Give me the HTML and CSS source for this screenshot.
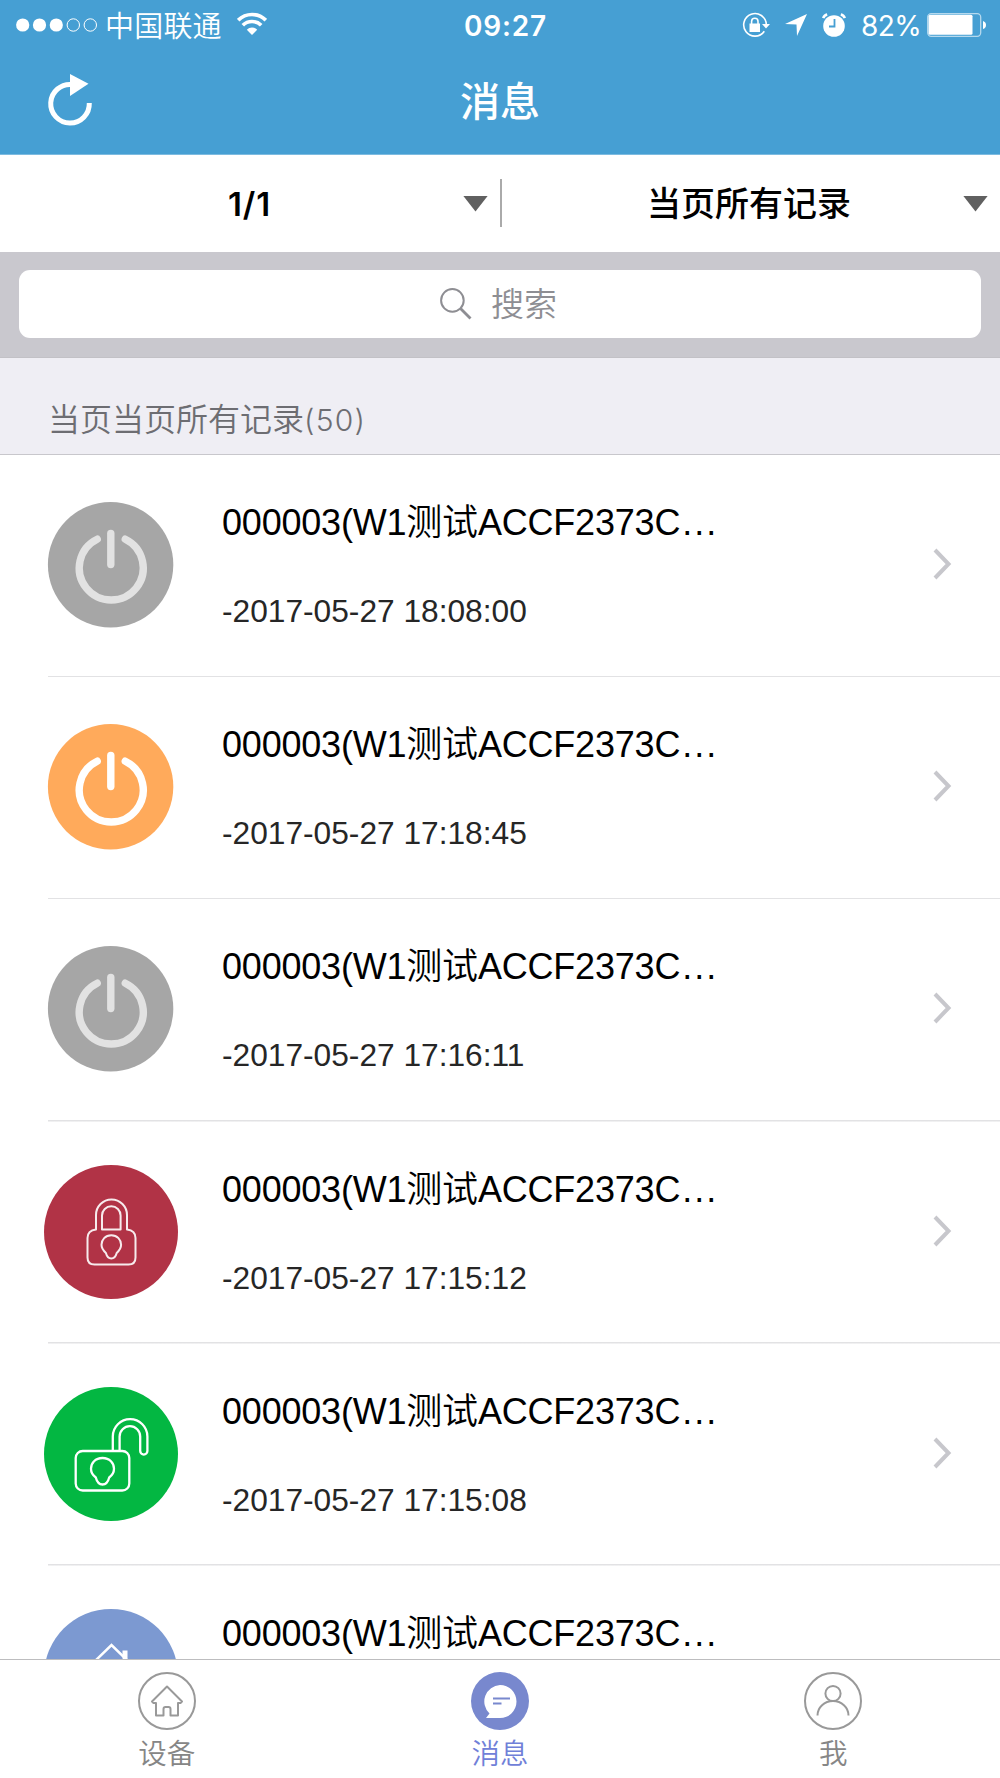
FILE: index.html
```html
<!DOCTYPE html>
<html lang="zh-CN">
<head>
<meta charset="utf-8">
<title>消息</title>
<link rel="stylesheet" href="styles.css">
</head>
<body>
<svg class="defs" width="0" height="0">
  <defs>
    <symbol id="power" viewBox="0 0 134 134">
      <circle class="disc" cx="66.6" cy="66.800" r="62.7"/>
      <g fill="none" stroke="currentColor" stroke-width="7.4" stroke-linecap="round">
        <path d="M53.2 41.200A32 32 0 1 0 81.3 41.200"/>
        <path d="M66.8 35.500v31"/>
      </g>
    </symbol>
    <symbol id="lock" viewBox="0 0 134 134">
      <circle class="disc" cx="67" cy="67" r="67"/>
      <g fill="none" stroke="#fff" stroke-opacity=".9" stroke-width="2" stroke-linejoin="round">
        <path d="M52 64.500V50a15.500 15.500 0 0 1 31 0v14.500q8.500 1 8.500 8.500v19.500q0 7-7 7h-34q-7 0-7-7V73q0-7.500 8.500-8.500z"/>
        <path d="M58 64.500V50.500a9.300 9.300 0 0 1 18.600 0v14z"/>
        <path d="M67.300 70.300c6 0 9.800 4.400 9.800 9.500 0 4-2 6-4.400 8.200-.8 3-2 5.500-5.400 5.500s-4.600-2.500-5.400-5.500c-2.400-2.200-4.400-4.200-4.400-8.200 0-5.100 3.800-9.500 9.800-9.500z"/>
      </g>
    </symbol>
    <symbol id="unlock" viewBox="0 0 134 134">
      <circle class="disc" cx="67" cy="67" r="67"/>
      <g fill="none" stroke="#fff" stroke-width="2.300" stroke-linejoin="round">
        <rect x="31.700" y="64" width="53.600" height="39.500" rx="7"/>
        <path d="M68.800 64V49.500a17.300 17.300 0 0 1 34.600 0V64a3.600 3.600 0 0 1-7.200 0V49.500a10.300 10.300 0 0 0-20.600 0V64"/>
        <path d="M58.500 71c7.200 0 11.500 5 11.500 10.800 0 4.200-2 6.700-4.800 8.700-1 4-2.700 7-6.700 7s-5.700-3-6.700-7c-2.800-2-4.800-4.500-4.800-8.700C47 76 51.300 71 58.500 71z"/>
      </g>
    </symbol>
    <symbol id="house" viewBox="0 0 134 134">
      <circle class="disc" cx="67" cy="67" r="67"/>
      <path d="M48 55L67.500 36 87 55M81 42v12" fill="none" stroke="#fff" stroke-width="2.500"/>
      <path d="M78.500 41.500h5v13l-5-5z" fill="#fff"/>
    </symbol>
    <symbol id="chevron" viewBox="0 0 20 34">
      <path d="M2 3L15.500 17 2 31" fill="none" stroke="#c7c7cc" stroke-width="4"/>
    </symbol>
  </defs>
</svg>
<div class="screen">
  <header class="top">
    <div class="status">
      <div class="carrier">
        <svg width="84" height="16" viewBox="0 0 84 16">
          <g fill="#fff"><circle cx="7.700" cy="8" r="6.600"/><circle cx="24.500" cy="8" r="6.600"/><circle cx="41.300" cy="8" r="6.600"/></g>
          <g fill="none" stroke="#fff" stroke-width="1"><circle cx="58.300" cy="8" r="6.200"/><circle cx="75.300" cy="8" r="6.200"/></g>
        </svg>
        <span class="operator">中国联通</span>
        <svg class="wifi" width="30" height="24" viewBox="0 0 30 24">
          <g fill="none" stroke="#fff" stroke-width="3.600"><path d="M1.200 8.200a19.500 19.500 0 0 1 27.600 0"/><path d="M5.800 13.300a13 13 0 0 1 18.400 0"/></g>
          <path d="M15 23l-5.200-5.300a7.400 7.400 0 0 1 10.400 0z" fill="#fff"/>
        </svg>
      </div>
      <div class="clock">09:27</div>
      <div class="indicators">
        <svg width="28" height="26" viewBox="0 0 28 26">
          <path d="M22.300 19.300A11.300 11.300 0 1 1 24.300 12.500" fill="none" stroke="#fff" stroke-width="1.600"/>
          <path d="M20 12h8l-4 4.500zM7.500 11.500h10.500v8.500h-10.500z" fill="#fff"/>
          <path d="M9.600 12V9.500a3.200 3.200 0 0 1 6.400 0V12" fill="none" stroke="#fff" stroke-width="1.600"/>
        </svg>
        <svg class="location" width="22" height="22" viewBox="0 0 22 22"><path d="M22 0L12 22 11.500 10.500 0 10z" fill="#fff"/></svg>
        <svg class="alarm" width="24" height="24" viewBox="0 0 24 24">
          <circle cx="12" cy="13" r="10.800" fill="#fff"/>
          <path d="M1.200 5.200q1-3 4-3.700M18.800 1.500q3 .7 4 3.700" fill="none" stroke="#fff" stroke-width="2.600"/>
          <path d="M12.500 6v7.500H7" fill="none" stroke="#469fd3" stroke-width="1.800"/>
        </svg>
        <span class="percent">82%</span>
        <svg class="battery" width="60" height="24" viewBox="0 0 60 24">
          <rect x=".7" y=".7" width="53" height="22.600" rx="3.500" fill="none" stroke="#b5d9ee" stroke-width="1.300"/>
          <rect x="1.500" y="1.800" width="44" height="20" rx="1.500" fill="#fff"/>
          <path d="M56 8q3 1 3 4t-3 4z" fill="#fff"/>
        </svg>
      </div>
    </div>
    <div class="nav">
      <svg class="refresh" width="48" height="54" viewBox="0 0 48 54">
        <path d="M25 10.500A19.300 19.300 0 1 0 42.300 29" fill="none" stroke="#fff" stroke-width="5"/>
        <path d="M23 0l18.500 9.700L23 22z" fill="#fff"/>
      </svg>
      <h1>消息</h1>
    </div>
  </header>

  <div class="filters">
    <div class="filter"><span class="pages">1/1</span><i class="caret"></i></div>
    <div class="rule"></div>
    <div class="filter"><span>当页所有记录</span><i class="caret"></i></div>
  </div>

  <div class="searchbar">
    <div class="field">
      <svg width="32" height="32" viewBox="0 0 32 32" fill="none" stroke="#8e8e93"><circle cx="12.400" cy="12.400" r="11.300" stroke-width="2"/><path d="M20.500 20.500l10 10" stroke-width="2.800"/></svg>
      <span>搜索</span>
    </div>
  </div>

  <div class="section">当页当页所有记录<span>(50)</span></div>

  <main class="list">
    <article class="row off">
      <svg class="icon"><use href="#power"/></svg>
      <div class="body"><div class="info"><div class="name">000003(W1测试ACCF2373C<span>...</span></div><div class="time">-2017-05-27 18:08:00</div></div><svg class="more"><use href="#chevron"/></svg></div>
    </article>
    <article class="row on">
      <svg class="icon"><use href="#power"/></svg>
      <div class="body"><div class="info"><div class="name">000003(W1测试ACCF2373C<span>...</span></div><div class="time">-2017-05-27 17:18:45</div></div><svg class="more"><use href="#chevron"/></svg></div>
    </article>
    <article class="row off">
      <svg class="icon"><use href="#power"/></svg>
      <div class="body"><div class="info"><div class="name">000003(W1测试ACCF2373C<span>...</span></div><div class="time">-2017-05-27 17:16:11</div></div><svg class="more"><use href="#chevron"/></svg></div>
    </article>
    <article class="row locked">
      <svg class="icon"><use href="#lock"/></svg>
      <div class="body"><div class="info"><div class="name">000003(W1测试ACCF2373C<span>...</span></div><div class="time">-2017-05-27 17:15:12</div></div><svg class="more"><use href="#chevron"/></svg></div>
    </article>
    <article class="row unlocked">
      <svg class="icon"><use href="#unlock"/></svg>
      <div class="body"><div class="info"><div class="name">000003(W1测试ACCF2373C<span>...</span></div><div class="time">-2017-05-27 17:15:08</div></div><svg class="more"><use href="#chevron"/></svg></div>
    </article>
    <article class="row home">
      <svg class="icon"><use href="#house"/></svg>
      <div class="body"><div class="info"><div class="name">000003(W1测试ACCF2373C<span>...</span></div></div></div>
    </article>
  </main>

  <nav class="tabs">
    <a class="tab">
      <svg width="60" height="60" viewBox="0 0 60 60" fill="none" stroke="#999" stroke-width="2" stroke-linejoin="round">
        <circle cx="30" cy="30" r="28"/>
        <path d="M30 15.500L45 30.500l-1.500 1.500H41v12.500h-7.500V38q0-2-2-2h-3q-2 0-2 2v6.500H19V32h-2.500L15 30.500z"/>
      </svg>
      <span>设备</span>
    </a>
    <a class="tab active">
      <svg width="60" height="60" viewBox="0 0 60 60">
        <circle cx="30" cy="30" r="29" fill="#7888ce"/>
        <path d="M30 14a16.500 16.500 0 1 1 0 33H16l3.500-4.500A16.500 16.500 0 0 1 30 14z" fill="#fff"/>
        <path d="M23 27.500h17M23 32.500h8.500" stroke="#7888ce" stroke-width="2.200"/>
      </svg>
      <span>消息</span>
    </a>
    <a class="tab">
      <svg width="60" height="60" viewBox="0 0 60 60" fill="none" stroke="#999" stroke-width="2">
        <circle cx="30" cy="30" r="28"/><circle cx="30" cy="22.500" r="7.600"/>
        <path d="M14.500 44.500a15.500 14.400 0 0 1 31 0"/>
      </svg>
      <span>我</span>
    </a>
  </nav>
</div>
</body>
</html>
```
FILE: styles.css
```css
* { box-sizing: border-box; }
body {
  margin: 0;
  background: #fff;
  color: #000;
  font-family: Inter, "Noto Sans CJK SC", sans-serif;
}
svg { display: block; flex: none; }
.defs { position: absolute; }
.screen {
  width: 1000px;
  height: 1778px;
  display: flex;
  flex-direction: column;
  overflow: hidden;
}

/* status and navigation bars */
.top {
  height: 155px;
  flex: none;
  background: #469fd3;
  border-bottom: 1px solid #7dbbe0;
  color: #fff;
}
.status {
  height: 49px;
  display: grid;
  grid-template-columns: 400px 210px 390px;
  align-items: center;
}
.carrier { display: flex; align-items: center; padding-left: 15px; }
.operator {
  margin-left: 6px;
  width: 118px;
  font-size: 29px;
  line-height: 40px;
  letter-spacing: .2px;
  font-weight: 350;
  white-space: nowrap;
  padding-top: 4px;
}
.wifi { margin: -1px 0 0 14px; }
.clock {
  text-align: center;
  font-size: 28px;
  line-height: 40px;
  font-weight: 600;
  letter-spacing: .8px;
  padding: 2px 0 0 1px;
}
.indicators { display: flex; align-items: center; padding-left: 132px; }
.location { margin-left: 15px; }
.alarm { margin-left: 15px; }
.percent {
  width: 65px;
  margin-left: 15px;
  font-size: 28px;
  line-height: 40px;
  letter-spacing: -.6px;
  padding-top: 2px;
}
.battery { margin-left: 1px; }
.nav {
  height: 105px;
  display: grid;
  grid-template-columns: 95px 1fr 95px;
}
.refresh { margin: 25px 0 0 47px; }
.nav h1 {
  margin: 0;
  text-align: center;
  font-size: 40px;
  line-height: 106px;
  font-weight: 500;
}

/* filters */
.filters {
  height: 97px;
  flex: none;
  display: grid;
  grid-template-columns: 500px 2px 498px;
  align-items: center;
  padding-bottom: 1px;
}
.filter {
  display: flex;
  align-items: center;
  font-size: 34px;
  font-weight: 500;
  line-height: 48px;
}
.filter span { flex: 1; text-align: center; padding: 2px 0 0 36px; }
.filter:last-child span { padding-left: 33px; }
.filter .pages { font-size: 33px; font-weight: 600; letter-spacing: .8px; }
.caret {
  width: 25px;
  height: 16px;
  margin: 1px 12px 0 0;
  background: #606060;
  clip-path: polygon(0 0, 100% 0, 50% 100%);
}
.rule { height: 48px; background: #aaa; }

/* search */
.searchbar {
  height: 106px;
  flex: none;
  padding: 18px 19px 0;
  background: #c9c8ce;
  border-bottom: 1px solid #c2c1c6;
}
.field {
  height: 68px;
  border-radius: 11px;
  background: #fff;
  color: #8e8e93;
  display: flex;
  align-items: center;
  justify-content: center;
  gap: 19px;
  padding-right: 3px;
  font-size: 33px;
  line-height: 48px;
  font-weight: 350;
}
.section {
  height: 97px;
  flex: none;
  padding: 39px 0 0 48px;
  background: #efeef4;
  border-bottom: 1px solid #c8c7cc;
  color: #6d6d72;
  font-size: 32px;
  line-height: 46px;
  font-weight: 350;
}
.section span { font-size: 30px; letter-spacing: 1.200px; }

/* records */
.list { flex: 1; min-height: 0; overflow: hidden; }
.row {
  height: 222.200px;
  display: grid;
  grid-template-columns: 179px 1fr;
  background: linear-gradient(#e2e2e4, #e2e2e4) 48px 100% / 952px 1.500px no-repeat;
}
.icon { width: 134px; height: 134px; margin: 43px 0 0 44px; }
.off { --disc: #a6a6a6; color: #e2e2e2; }
.on { --disc: #ffaa5b; color: #fff; }
.locked { --disc: #b13346; }
.unlocked { --disc: #03b742; }
.home { --disc: #7c99d1; }
.disc { fill: var(--disc); }
.body { display: flex; justify-content: space-between; padding: 0 47px 0 43px; color: #000; }
.name {
  margin-top: 44px;
  font-family: "Liberation Sans", "Noto Sans CJK SC", sans-serif;
  font-size: 36px;
  line-height: 48px;
  letter-spacing: -.2px;
  white-space: nowrap;
  font-weight: 350;
}
.name span { letter-spacing: 2px; margin-left: 2px; }
.time {
  margin-top: 42px;
  font-family: "Liberation Sans", sans-serif;
  font-size: 31.700px;
  line-height: 44px;
  color: #262626;
  white-space: nowrap;
}
.more { width: 20px; height: 34px; margin-top: 92px; }

/* tab bar */
.tabs {
  height: 119px;
  flex: none;
  display: grid;
  grid-template-columns: repeat(3, 1fr);
  border-top: 1px solid #bdbdbf;
}
.tab {
  display: flex;
  flex-direction: column;
  align-items: center;
  padding-top: 11px;
  color: #868686;
  font-size: 28.500px;
  line-height: 40px;
  font-weight: 350;
}
.tab span { margin-top: 3px; }
.active { color: #7080d8; }
```
